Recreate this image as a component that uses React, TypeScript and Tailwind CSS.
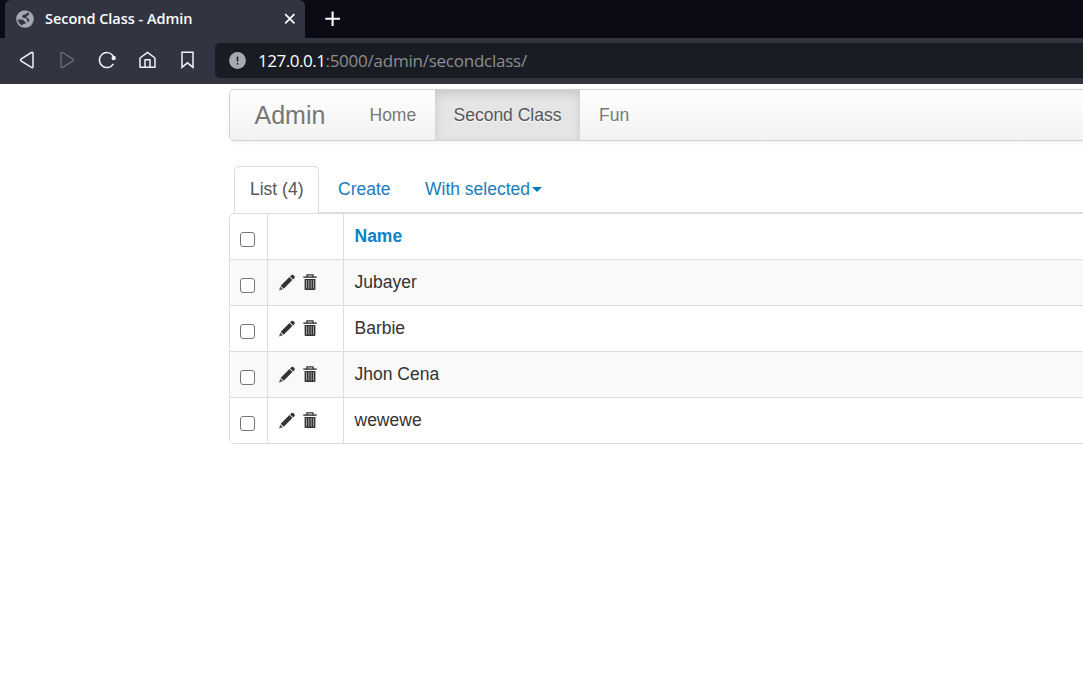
import React from "react";

const rows = ["Jubayer", "Barbie", "Jhon Cena", "wewewe"];

function Pencil() {
  return (
    <svg width="17" height="18" viewBox="0 0 17 18" fill="#333" className="shrink-0">
      <path d="M0.1 16.4 L1.2 12.5 L4 15.3 Z" fill="#555" />
      <path d="M1.7 11.8 L10.4 3.1 L13.4 6.1 L4.7 14.8 Z" />
      <path d="M11.1 2.4 L12.5 1 Q13.6 0.2 14.6 1.2 L15.3 1.9 Q16.3 2.9 15.5 4 L14.1 5.4 Z" />
    </svg>
  );
}

function Trash() {
  return (
    <svg width="14" height="17" viewBox="0 0 14 17" fill="none" className="shrink-0">
      <path d="M4 3 V0.8 H10 V3" stroke="#333" strokeWidth="1.3" />
      <path d="M0.3 2.4 H13.7 V3.8 H0.3 Z" fill="#333" />
      <path d="M1.6 4.9 H12.4 V15.1 Q12.4 16 11.5 16 H2.5 Q1.6 16 1.6 15.1 Z" fill="#333" />
      <path d="M3.5 6 V14.6 M5.8 6 V14.6 M8.2 6 V14.6 M10.5 6 V14.6" stroke="#aaa" strokeWidth="0.9" />
    </svg>
  );
}

function Check() {
  return (
    <input
      type="checkbox"
      className="block h-[15px] w-[15px] shrink-0 appearance-none rounded-[3px] border border-[#767676] bg-white"
    />
  );
}

function Browser() {
  return (
    <header className="font-['Open_Sans','Noto_Sans',sans-serif]">
      <div className="flex h-[38px] bg-[#0b0b16] pl-[5px]">
        <div className="flex h-[38px] w-[300px] items-center rounded-t-[6px] bg-[#323442] pl-[11px] pr-[9px]">
          <svg width="18" height="18" viewBox="0 0 18 18" className="shrink-0">
            <circle cx="9" cy="9" r="8.8" fill="#a5a8b1" />
            <path d="M1.8 9.6 H5.6 Q8.2 9.8 8.3 11.4 L9.8 12 Q10 13.7 8.4 14 L6.8 14.3 L6.2 15.6 Q2.2 13.8 1.8 9.6 Z" fill="#323442" />
            <path d="M11.3 2.2 Q10.9 4.2 9.2 4.4 L7.4 4.8 Q6 5.6 6.2 7 Q7 8.2 9 8 Q10.8 8.2 11 9.8 L11.6 12 Q13.4 11.8 13.4 10 Q12.6 8.2 10.6 7.4 L10.4 6.2 Q12.8 5.4 13.4 3.4 Z" fill="#323442" />
          </svg>
          <span className="ml-[11px] w-[236px] whitespace-nowrap text-[14.5px] font-semibold leading-5 tracking-[-0.03px] text-white">
            Second Class - Admin
          </span>
          <svg width="12" height="12" viewBox="0 0 12 12" className="ml-auto shrink-0">
            <path d="M1.2 1.2 L10.4 10.4 M10.4 1.2 L1.2 10.4" stroke="#fff" strokeWidth="1.7" />
          </svg>
        </div>
        <svg width="16" height="16" viewBox="0 0 16 16" className="ml-5 mt-[11px]">
          <path d="M7.6 0.5 V15 M0.3 7.8 H15" stroke="#fff" strokeWidth="2.1" />
        </svg>
      </div>
      <div className="flex h-[46px] items-center bg-[#323442]">
        <svg width="215" height="46" viewBox="0 0 215 46" fill="none" stroke="#f1f2f5" strokeWidth="1.5" strokeLinejoin="round" className="shrink-0">
          <path d="M31.5 14.5 Q33 13.8 33 15.5 V28.5 Q33 30.2 31.5 29.4 L21.3 23.2 Q20 22 21.3 20.9 Z" />
          <path d="M62.5 14.5 Q61 13.8 61 15.5 V28.5 Q61 30.2 62.5 29.4 L72.7 23.2 Q74 22 72.7 20.9 Z" stroke="#6c6e7b" strokeWidth="1.3" />
          <path d="M113.2 18 A7.5 7.5 0 1 0 113.4 25.8" />
          <circle cx="113.7" cy="20" r="2.2" fill="#f1f2f5" stroke="none" />
          <path d="M140 20 L147.5 14.4 L155 20 V29.3 H140 Z" />
          <path d="M145 29.3 V21.8 H150 V29.3" />
          <path d="M182 14.3 H193 V29.3 L187.5 24.8 L182 29.3 Z" strokeLinejoin="miter" />
        </svg>
        <div className="mt-[-1px] flex h-[35px] grow items-center rounded-l-[5px] bg-[#191c22] pl-[14px]">
          <svg width="17" height="17" viewBox="0 0 17 17" className="shrink-0">
            <circle cx="8.5" cy="8.5" r="8.4" fill="#a7a9b0" />
            <path d="M8.5 4.4 V9.5 M8.5 10.9 V12.5" stroke="#191b21" strokeWidth="1.5" />
          </svg>
          <span className="ml-3 whitespace-nowrap text-[17px] leading-6 tracking-[-0.24px] text-[#8c8e93]">
            <span className="tracking-[-0.48px] text-white">127.0.0.1</span>:5000/admin/secondclass/
          </span>
        </div>
      </div>
    </header>
  );
}

export default function App() {
  return (
    <div className="h-[696px] w-full overflow-hidden bg-white">
      <Browser />
      <main className="ml-[229px] w-[900px] pt-[5px] font-['Liberation_Sans',Arial,sans-serif] text-[17.5px] leading-[25px] text-[#333]">
        <nav className="flex h-[52px] rounded-[5px] border border-[#d4d4d4] bg-linear-to-b from-white to-[#f2f2f2] text-[#777] shadow-[0_1px_5px_rgba(0,0,0,0.067)]">
          <span className="w-[121px] whitespace-nowrap pl-[24.5px] pt-[13px] text-[25px] [text-shadow:0_1px_0_white]">Admin</span>
          <span className="w-[84px] pl-[18.5px] pt-[13px] [text-shadow:0_1px_0_white]">Home</span>
          <span className="w-[145px] whitespace-nowrap bg-[#e5e5e5] pl-[18.5px] pt-[13px] text-[#555] shadow-[inset_0_4px_10px_rgba(0,0,0,0.125)] [text-shadow:0_1px_0_white]">Second Class</span>
          <span className="pl-[19px] pt-[13px] [text-shadow:0_1px_0_white]">Fun</span>
        </nav>
        <div className="ml-[5px] mt-[25px] flex h-[47px] border-b border-[#ddd]">
          <span className="h-[47px] w-[85px] whitespace-nowrap rounded-t-[5px] border border-b-0 border-[#ddd] bg-white pl-[15px] pt-[10px] text-[#555]">List (4)</span>
          <span className="w-[106px] pl-[19px] pt-[11px] text-[#1b7cbb]">Create</span>
          <span className="flex pt-[11px] text-[#1b7cbb]">
            With selected
            <svg width="10" height="5" viewBox="0 0 10 5" className="ml-[2px] mt-[10px]">
              <path d="M0 0 H10 L5 5 Z" fill="#0878b5" />
            </svg>
          </span>
        </div>
        <div className="h-[231px] overflow-hidden rounded-[5px] border border-[#ddd]">
          <div className="grid h-[45px] grid-cols-[38px_76px_1fr]">
            <div className="border-r border-[#ddd] pl-[10px] pt-[18px]"><Check /></div>
            <div className="border-r border-[#ddd]" />
            <div className="pl-[10.5px] pt-[10px] font-bold text-[#0c83c6]">Name</div>
          </div>
          {rows.map((name) => (
            <div key={name} className="grid h-[46px] grid-cols-[38px_76px_1fr] border-t border-[#ddd] odd:bg-white even:bg-[#f9f9f9]">
              <div className="border-r border-[#ddd] pl-[10px] pt-[18px]"><Check /></div>
              <div className="flex gap-[7px] border-r border-[#ddd] pl-[11px] pt-[14px]">
                <Pencil />
                <Trash />
              </div>
              <div className="pl-[10.5px] pt-[10px]">{name}</div>
            </div>
          ))}
        </div>
      </main>
    </div>
  );
}
